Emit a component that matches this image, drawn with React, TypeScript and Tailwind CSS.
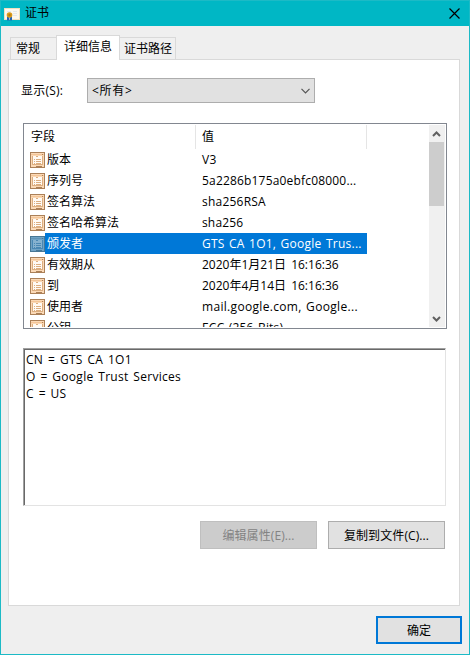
import React from "react";

function FieldIcon({ selected = false }: { selected?: boolean }) {
  const edge = selected ? "#477795" : "#ab8058";
  const fill = selected ? "#6fa3c6" : "#fbd9b6";
  const paper = selected ? "#86b2cf" : "#fffaf4";
  const line = selected ? "#4a88b3" : "#dcae80";
  return (
    <svg width="15" height="16" viewBox="0 0 15 16" shapeRendering="crispEdges" className="block shrink-0">
      <rect x="0.5" y="0.5" width="14" height="15" rx="1" fill={fill} stroke={edge} />
      <path d="M1 2.5h13" stroke={selected ? "#6093b5" : "#f3c598"} />
      <path d="M12 2.5h1" stroke={edge} />
      <rect x="2.5" y="4.5" width="10" height="8" fill={paper} stroke={line} />
      <path d="M3 4.5h3M8 4.5h4" stroke={paper} />
      <path d="M4 7.5h1M6 7.5h5M4 9.5h1M6 9.5h5M4 11.5h1M6 11.5h5" stroke={line} />
      <path d="M1 13.5h13" stroke={fill} />
      <path d="M6 14.5h6" stroke={edge} />
    </svg>
  );
}

const rows = [
  { name: "版本", value: "V3", spacing: "tracking-[0.3px]" },
  { name: "序列号", value: "5a2286b175a0ebfc08000...", spacing: "tracking-[0.18px]" },
  { name: "签名算法", value: "sha256RSA", spacing: "tracking-[0.22px]" },
  { name: "签名哈希算法", value: "sha256", spacing: "tracking-[0.15px]" },
  { name: "颁发者", value: "GTS CA 1O1, Google Trus...", spacing: "tracking-[0.25px] [word-spacing:1px]", selected: true },
  { name: "有效期从", value: "2020年1月21日 16:16:36", spacing: "[word-spacing:2px]" },
  { name: "到", value: "2020年4月14日 16:16:36", spacing: "[word-spacing:2px]" },
  { name: "使用者", value: "mail.google.com, Google...", spacing: "tracking-[0.32px] [word-spacing:1px]" },
  { name: "公钥", value: "ECC (256 Bits)", spacing: "tracking-[0.2px] [word-spacing:1px]" },
];

export default function App() {
  return (
    <div className="flex h-[655px] w-[470px] flex-col overflow-hidden border border-[#1cbac6] bg-[#efefef] font-['Open_Sans','Noto_Sans_CJK_SC',sans-serif] text-[12px] leading-[17px] text-black">
      <header className="flex h-[25px] shrink-0 items-center bg-[#00b7c5] pl-[3px] pr-[9px]">
        <svg width="16" height="13" viewBox="0 0 16 13" className="mt-[2px]">
          <rect x="0.5" y="0.5" width="15" height="11" fill="#fbf8f0" stroke="#efe0bf" />
          <path d="M3 3.5h4M9 3.5h4M9 5.5h4M9 7.5h4" stroke="#e3e8ee" />
          <path d="M3 8.5h2.2V13L4 12l-1 1zM5.8 8.5H8V13l-1-1-1.2 1z" fill="#2464b8" />
          <circle cx="5.5" cy="7" r="2.8" fill="#d89a1c" />
          <circle cx="5.5" cy="7" r="1.2" fill="#b87a0c" />
        </svg>
        <span className="ml-[5px] pb-[2px]">证书</span>
        <svg width="11" height="11" viewBox="0 0 11 11" className="ml-auto">
          <path d="M0.5 0.5l10 10M10.5 0.5l-10 10" stroke="#000" strokeWidth="1.2" />
        </svg>
      </header>

      <nav className="z-10 ml-[9px] mt-[9px] flex h-[25px] shrink-0 items-end">
        <div className="mb-px h-[22px] w-[47px] border border-b-0 border-[#d9d9d9] bg-[#f0f0f0] pl-[5px] pt-[2px]">常规</div>
        <div className="-ml-px h-[25px] w-[64px] border border-b-0 border-[#d9d9d9] bg-white pl-[7px] pt-[2px]">详细信息</div>
        <div className="mb-px h-[22px] w-[56px] border border-b-0 border-l-0 border-[#d9d9d9] bg-[#f0f0f0] pl-[4px] pt-[2px]">证书路径</div>
      </nav>

      <main className="-mt-px ml-[7px] flex h-[547px] w-[452px] shrink-0 flex-col border border-[#d9d9d9] bg-white pl-[14px]">
        <div className="-ml-[2px] mt-[18px] flex h-[25px] items-center">
          <span className="w-[66px] tracking-[0.2px]">显示(S):</span>
          <div className="flex h-[25px] w-[228px] items-center justify-between border border-[#adadad] bg-[#e1e1e1] pl-[4px] pr-[4px]">
            <span className="tracking-[0.7px]">&lt;所有&gt;</span>
            <svg width="9" height="6" viewBox="0 0 9 6"><path d="M0.5 0.8l4 4 4-4" fill="none" stroke="#555" strokeWidth="1.2" /></svg>
          </div>
        </div>

        <section className="mt-[20px] flex h-[206px] w-[424px] shrink-0 justify-between border border-[#828790] px-px py-px pl-0">
          <div className="flex h-[202px] w-[343px] flex-col overflow-hidden">
            <div className="flex h-[24px] shrink-0 items-center">
              <div className="h-[24px] w-[172px] border-r border-[#e5e5e5] pl-[7px] pt-[3px]">字段</div>
              <div className="h-[24px] w-[171px] border-r border-[#e5e5e5] pl-[6px] pt-[3px]">值</div>
            </div>
            {rows.map((row) => (
              <div key={row.name} className="flex h-[21px] shrink-0 items-center pl-[6px]">
                <FieldIcon selected={row.selected} />
                <div className={`flex h-[21px] w-[322px] items-center whitespace-nowrap pl-[2px] ${row.selected ? "bg-[#0078d7] text-white" : ""}`}>
                  <span className="w-[155px]">{row.name}</span>
                  <span className={row.spacing}>{row.value}</span>
                </div>
              </div>
            ))}
          </div>
          <div className="flex h-[202px] w-[16px] flex-col items-start bg-[#f0f0f0]">
            <svg width="15" height="17" viewBox="0 0 15 17"><path d="M4 11l3.5-3.5L11 11" fill="none" stroke="#606060" strokeWidth="2" /></svg>
            <div className="h-[64px] w-[15px] bg-[#cdcdcd]" />
            <svg width="15" height="17" viewBox="0 0 15 17" className="mt-auto"><path d="M4 7l3.5 3.5L11 7" fill="none" stroke="#606060" strokeWidth="2" /></svg>
          </div>
        </section>

        <section className="mt-[19px] h-[158px] w-[423px] shrink-0 border border-b-[#e3e3e3] border-l-[#a0a0a0] border-r-[#e3e3e3] border-t-[#a0a0a0]">
          <div className="h-full border-l border-t border-[#696969] pl-px pt-px tracking-[0.28px] [word-spacing:1.4px]">
            <p>CN = GTS CA 1O1</p>
            <p>O = Google Trust Services</p>
            <p>C = US</p>
          </div>
        </section>

        <div className="mt-[15px] flex w-[422px] justify-end gap-[11px]">
          <button className="h-[28px] w-[117px] border border-[#bfbfbf] bg-[#cccccc] tracking-[0.1px] text-[#838383]">编辑属性(E)...</button>
          <button className="h-[28px] w-[117px] border border-[#adadad] bg-[#e1e1e1] tracking-[0.1px]">复制到文件(C)...</button>
        </div>
      </main>

      <footer className="flex justify-end pr-[7px] pt-[10px]">
        <button className="h-[28px] w-[86px] border-2 border-[#0078d7] bg-[#e1e1e1]">确定</button>
      </footer>
    </div>
  );
}
